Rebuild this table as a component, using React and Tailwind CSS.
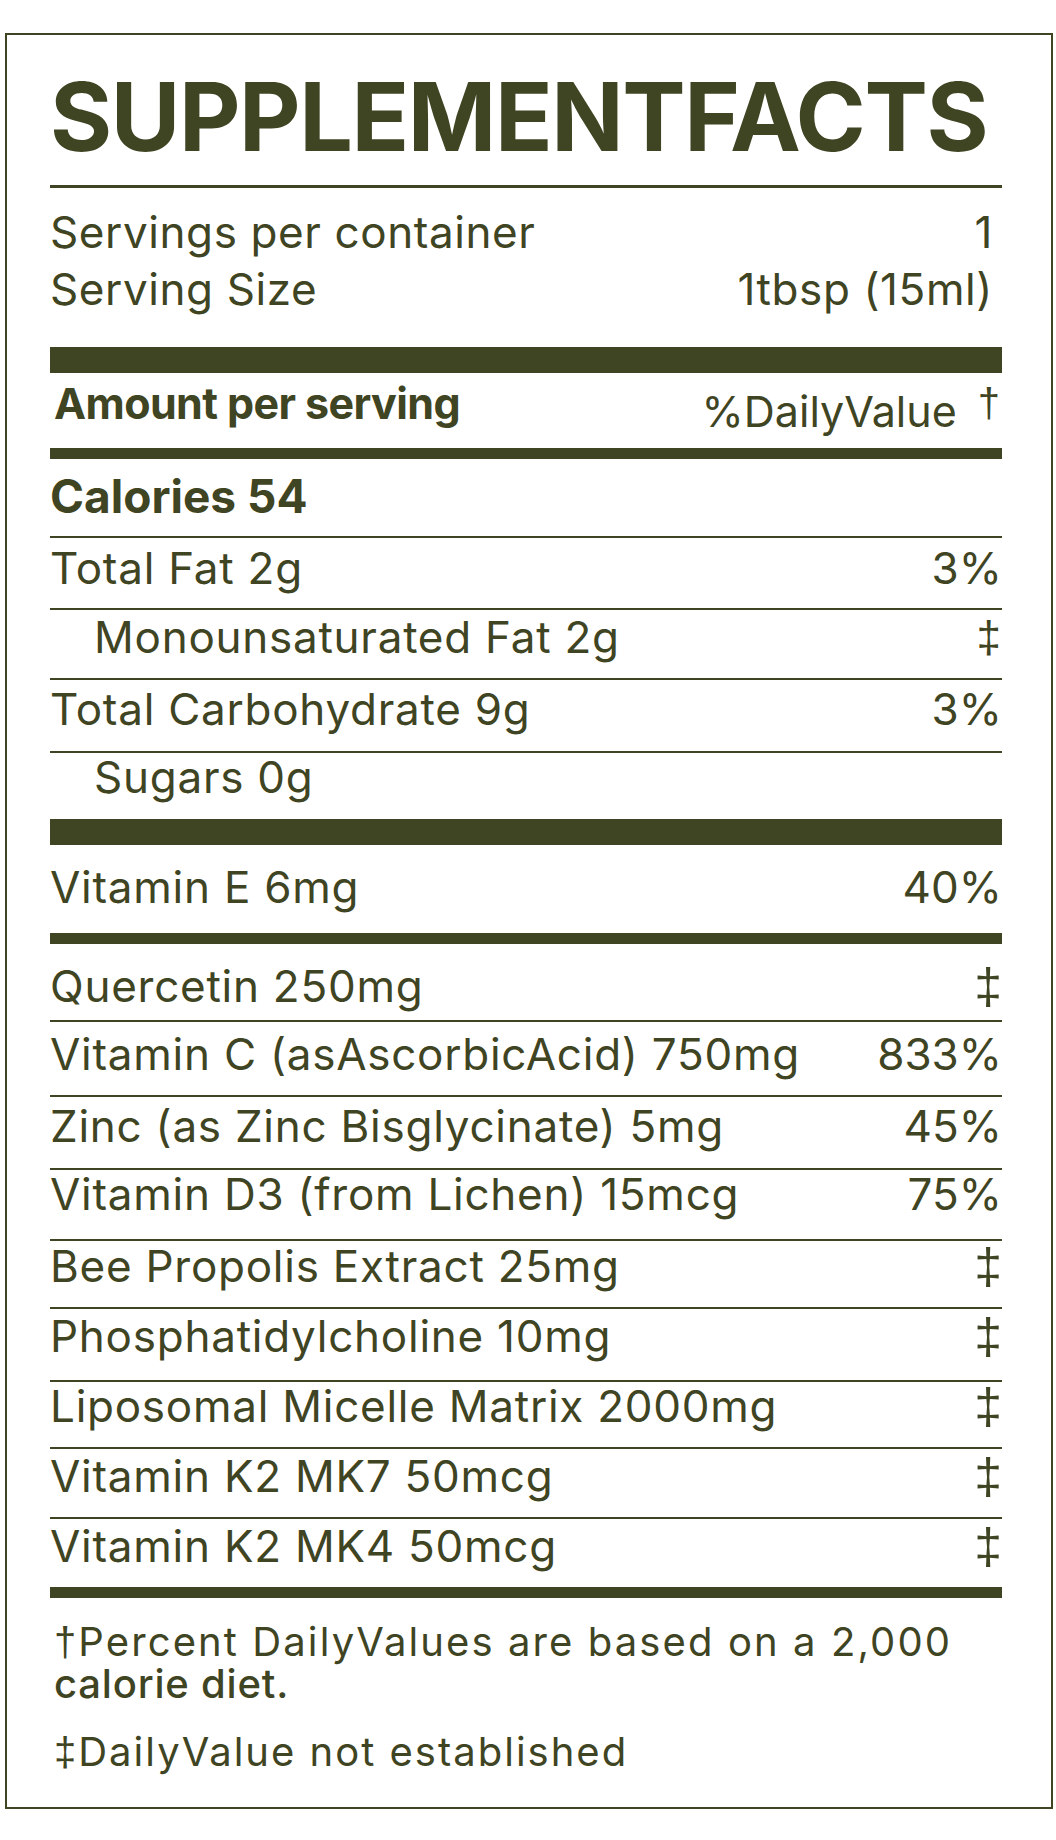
import React from 'react';

// ── Data ───────────────────────────────────────────────────────────────────────
const UPPER = [
  { name: 'Calories 54',            bold: true, h: 'h-[79px] pt-[14px]', line: true },
  { name: 'Total Fat 2g',           dv: '3%',   h: 'h-[72px] pt-[8px]',  line: true },
  { name: 'Monounsaturated Fat 2g', dv: '‡',    h: 'h-[70px] pt-[5px]',  line: true, sub: true, small: true },
  { name: 'Total Carbohydrate 9g',  dv: '3%',   h: 'h-[73px] pt-[7px]',  line: true },
  { name: 'Sugars 0g',                          h: 'h-[66px] pt-[2px]',  sub: true },
];

const LOWER = [
  { name: 'Quercetin 250mg',                   dv: '‡',    h: 'h-[78px] pt-[20px]', line: true },
  { name: 'Vitamin C (asAscorbicAcid) 750mg',  dv: '833%', h: 'h-[75px] pt-[10px]', line: true },
  { name: 'Zinc (as Zinc Bisglycinate) 5mg',   dv: '45%',  h: 'h-[73px] pt-[7px]',  line: true },
  { name: 'Vitamin D3 (from Lichen) 15mcg',    dv: '75%',  h: 'h-[71px] pt-[2px]',  line: true },
  { name: 'Bee Propolis Extract 25mg',         dv: '‡',    h: 'h-[68px] pt-[3px]',  line: true },
  { name: 'Phosphatidylcholine 10mg',          dv: '‡',    h: 'h-[73px] pt-[5px]',  line: true },
  { name: 'Liposomal Micelle Matrix 2000mg',   dv: '‡',    h: 'h-[67px] pt-[2px]',  line: true },
  { name: 'Vitamin K2 MK7 50mcg',              dv: '‡',    h: 'h-[70px] pt-[5px]',  line: true },
  { name: 'Vitamin K2 MK4 50mcg',              dv: '‡',    h: 'h-[68px] pt-[5px]' },
];

const DAGGER = "font-['Liberation_Sans',sans-serif]";

function Row({ r }) {
  const isDagger = r.dv === '‡';
  const dvCls = !isDagger
    ? 'text-[44px] leading-[44px]'
    : r.small
      ? `${DAGGER} text-[44px] leading-[44px] pr-[1px]`
      : `${DAGGER} text-[50px] leading-[44px]`;
  return (
    <div className={`flex items-start justify-between ${r.h} ${r.line ? 'border-b-2 border-[#3f4423]' : ''}`}>
      <span className={`${r.sub ? 'pl-[44px]' : ''} ${r.bold ? 'font-bold text-[46px] leading-[46px]' : 'text-[44px] leading-[44px] tracking-[0.75px]'}`}>
        {r.name}
      </span>
      {r.dv && <span className={dvCls}>{r.dv}</span>}
    </div>
  );
}

// ── Main ───────────────────────────────────────────────────────────────────────
export default function App() {
  return (
    <div className="w-[1056px] min-h-[1840px] bg-white pt-[33px] pl-[5px] font-[Inter,sans-serif] text-[#3f4423]">
      <div className="w-[1048px] border-2 border-[#3f4423] pl-[43px] pr-[49px] pt-[34px] pb-[34px]">

        {/* Title */}
        <h1 className="text-[95px] leading-[95px] font-bold tracking-[-1.4px]">SUPPLEMENTFACTS</h1>
        <div className="mt-[21px] h-[3px] bg-[#3f4423]" />

        {/* Servings */}
        <div className="mt-[16px] pr-[9px] text-[44px] leading-[57px] tracking-[0.6px]">
          <div className="flex justify-between"><span>Servings per container</span><span>1</span></div>
          <div className="flex justify-between"><span>Serving Size</span><span>1tbsp (15ml)</span></div>
        </div>
        <div className="mt-[29px] h-[26px] bg-[#3f4423]" />

        {/* Amount header */}
        <div className="h-[75px] pt-[2px] flex justify-between text-[43px] leading-[56px]">
          <span className="pl-[4px] font-bold tracking-[-0.6px]">Amount per serving</span>
          <span className="pr-[2px]">
            %DailyValue
            <span className={`${DAGGER} ml-[21px] text-[40px] align-[10px]`}>†</span>
          </span>
        </div>
        <div className="h-[11px] bg-[#3f4423]" />

        {UPPER.map(r => <Row key={r.name} r={r} />)}
        <div className="h-[26px] bg-[#3f4423]" />

        <Row r={{ name: 'Vitamin E 6mg', dv: '40%', h: 'h-[88px] pt-[20px]' }} />
        <div className="h-[11px] bg-[#3f4423]" />

        {LOWER.map(r => <Row key={r.name} r={r} />)}
        <div className="h-[11px] bg-[#3f4423]" />

        {/* Footnotes */}
        <div className="pl-[4px] text-[40px] leading-[41px]">
          <p className="mt-[23px] tracking-[2.1px]">
            <span className={DAGGER}>†</span>Percent DailyValues are based on a 2,000
            <br />
            <span className="font-medium tracking-[0.8px]">calorie diet.</span>
          </p>
          <p className="mt-[27px] tracking-[2px]">
            <span className={DAGGER}>‡</span>DailyValue not established
          </p>
        </div>
      </div>
    </div>
  );
}
